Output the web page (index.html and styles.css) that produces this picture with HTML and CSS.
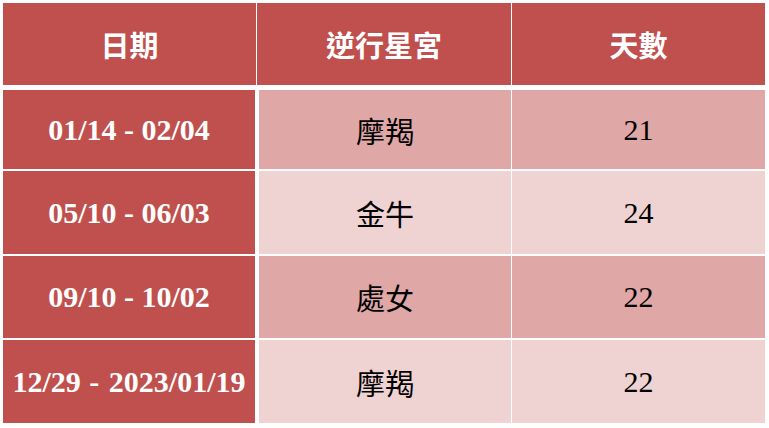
FILE: index.html
```html
<!DOCTYPE html>
<html lang="zh-Hant">
<head>
<meta charset="utf-8">
<title>水星逆行</title>
<link rel="stylesheet" href="styles.css">
</head>
<body>
<div class="table">
  <div class="head">
    <div class="hcell">日期</div>
    <div class="hcell">逆行星宮</div>
    <div class="hcell">天數</div>
  </div>
  <div class="row odd r1">
    <div class="date">01/14 - 02/04</div>
    <div class="sign">摩羯</div>
    <div class="days">21</div>
  </div>
  <div class="row even">
    <div class="date">05/10 - 06/03</div>
    <div class="sign">金牛</div>
    <div class="days">24</div>
  </div>
  <div class="row odd r3">
    <div class="date">09/10 - 10/02</div>
    <div class="sign">處女</div>
    <div class="days">22</div>
  </div>
  <div class="row even">
    <div class="date">12/29<span class="sp"> - </span>2023/01/19</div>
    <div class="sign">摩羯</div>
    <div class="days">22</div>
  </div>
</div>
</body>
</html>
```
FILE: styles.css
```css
html, body {
  margin: 0;
  padding: 0;
  background: #ffffff;
}
.table {
  margin: 3px 0 0 3px;
  width: 762px;
  display: flex;
  flex-direction: column;
  gap: 2px;
}
.head {
  display: grid;
  grid-template-columns: 253px 254px 253px;
  column-gap: 1px;
  height: 82px;
  margin-bottom: 3px;
}
.hcell {
  background: #C0504D;
  color: #ffffff;
  display: flex;
  align-items: center;
  justify-content: center;
  font-family: "Noto Sans CJK TC", "Noto Sans", sans-serif;
  font-weight: 700;
  font-size: 29px;
  line-height: 1;
}
.row {
  display: grid;
  grid-template-columns: 256px 253px 253px;
  height: 83px;
}
.row.r1 { height: 79px; }
.row.r3 { height: 82px; }
.row > div {
  display: flex;
  align-items: center;
  justify-content: center;
}
.date {
  background: #C0504D;
  color: #ffffff;
  margin-right: 4px;
  font-family: "Liberation Serif", "Times New Roman", serif;
  font-weight: 700;
  font-size: 30px;
  white-space: pre;
}
.sp {
  letter-spacing: 1px;
}
.sign {
  margin-right: 1px;
  color: #000000;
  font-family: "Noto Sans CJK TC", "Noto Sans", sans-serif;
  font-size: 29px;
  font-weight: 400;
}
.days {
  color: #000000;
  font-family: "Liberation Serif", "Times New Roman", serif;
  font-size: 30px;
}
.odd .sign, .odd .days { background: #DFA7A6; }
.even .sign, .even .days { background: #EFD3D2; }
```
